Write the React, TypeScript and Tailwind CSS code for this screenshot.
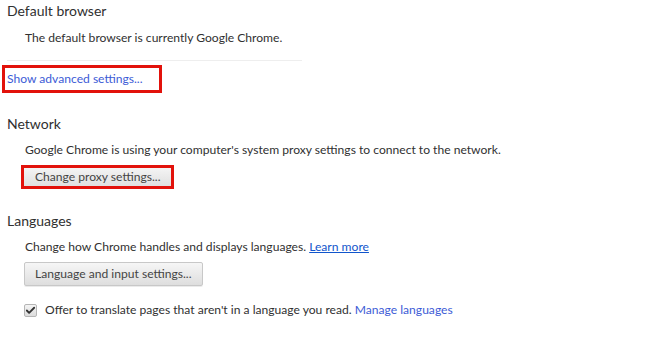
import { Check } from "lucide-react";

function Heading({ children }: { children: React.ReactNode }) {
  return <h3 className="pl-[7px] text-[14px] leading-[22px] text-[#303030]">{children}</h3>;
}

export default function App() {
  return (
    <div
      className="h-[347px] w-[645px] overflow-hidden bg-white text-[12.1px] text-[#303030]"
      style={{ fontFamily: 'Lato, "Open Sans", sans-serif' }}
    >
      <section>
        <Heading>Default browser</Heading>
        <p className="mt-[5px] pl-[25px] leading-[22px]">The default browser is currently Google Chrome.</p>
        <div className="ml-[7px] mt-[11px] h-px w-[295px] bg-[#eeeeee]" />
      </section>

      <div className="mt-[4px] flex">
        <div className="ml-[2px] border-[3px] border-[#e2120b] py-[3px] pl-[2px] pr-[16px]">
          <a className="block leading-[16px] text-[#3c5bd6]">Show advanced settings...</a>
        </div>
      </div>

      <section className="mt-[20px]">
        <Heading>Network</Heading>
        <p className="mt-[4px] pl-[25px] leading-[22px]">
          Google Chrome is using your computer's system proxy settings to connect to the network.
        </p>
        <div className="ml-[21px] mt-[4px] flex">
          <div className="border-[3px] border-[#e2120b]">
            <button className="block h-[18px] bg-gradient-to-b from-[#f4f4f4] to-[#e0e0e0] pl-[11px] pr-[10px] text-[12.1px] leading-[18px] text-[#444]">
              Change proxy settings...
            </button>
          </div>
        </div>
      </section>

      <section className="mt-[21px]">
        <Heading>Languages</Heading>
        <p className="mt-[4px] pl-[25px] leading-[22px]">
          Change how Chrome handles and displays languages.{" "}
          <a className="text-[#1155cc] underline">Learn more</a>
        </p>
        <div className="ml-[24px] mt-[4px]">
          <button className="h-6 rounded-[2px] border border-[#c8c8c8] bg-gradient-to-b from-[#f6f6f6] to-[#dedede] px-[10px] text-[12.1px] leading-[22px] text-[#444] shadow-[0_1px_0_rgba(0,0,0,0.08)]">
            Language and input settings...
          </button>
        </div>
        <label className="mt-[13px] flex items-center pl-[24px] leading-[22px]">
          <span className="flex h-[13px] w-[13px] items-center justify-center rounded-[2px] border border-[#b5b5b5] bg-gradient-to-b from-[#f4f4f4] to-[#dcdcdc]">
            <Check size={11} strokeWidth={4} className="text-[#333]" />
          </span>
          <span className="ml-[8px]">
            Offer to translate pages that aren't in a language you read.{" "}
            <a className="text-[#3c5bd6]">Manage languages</a>
          </span>
        </label>
      </section>
    </div>
  );
}
